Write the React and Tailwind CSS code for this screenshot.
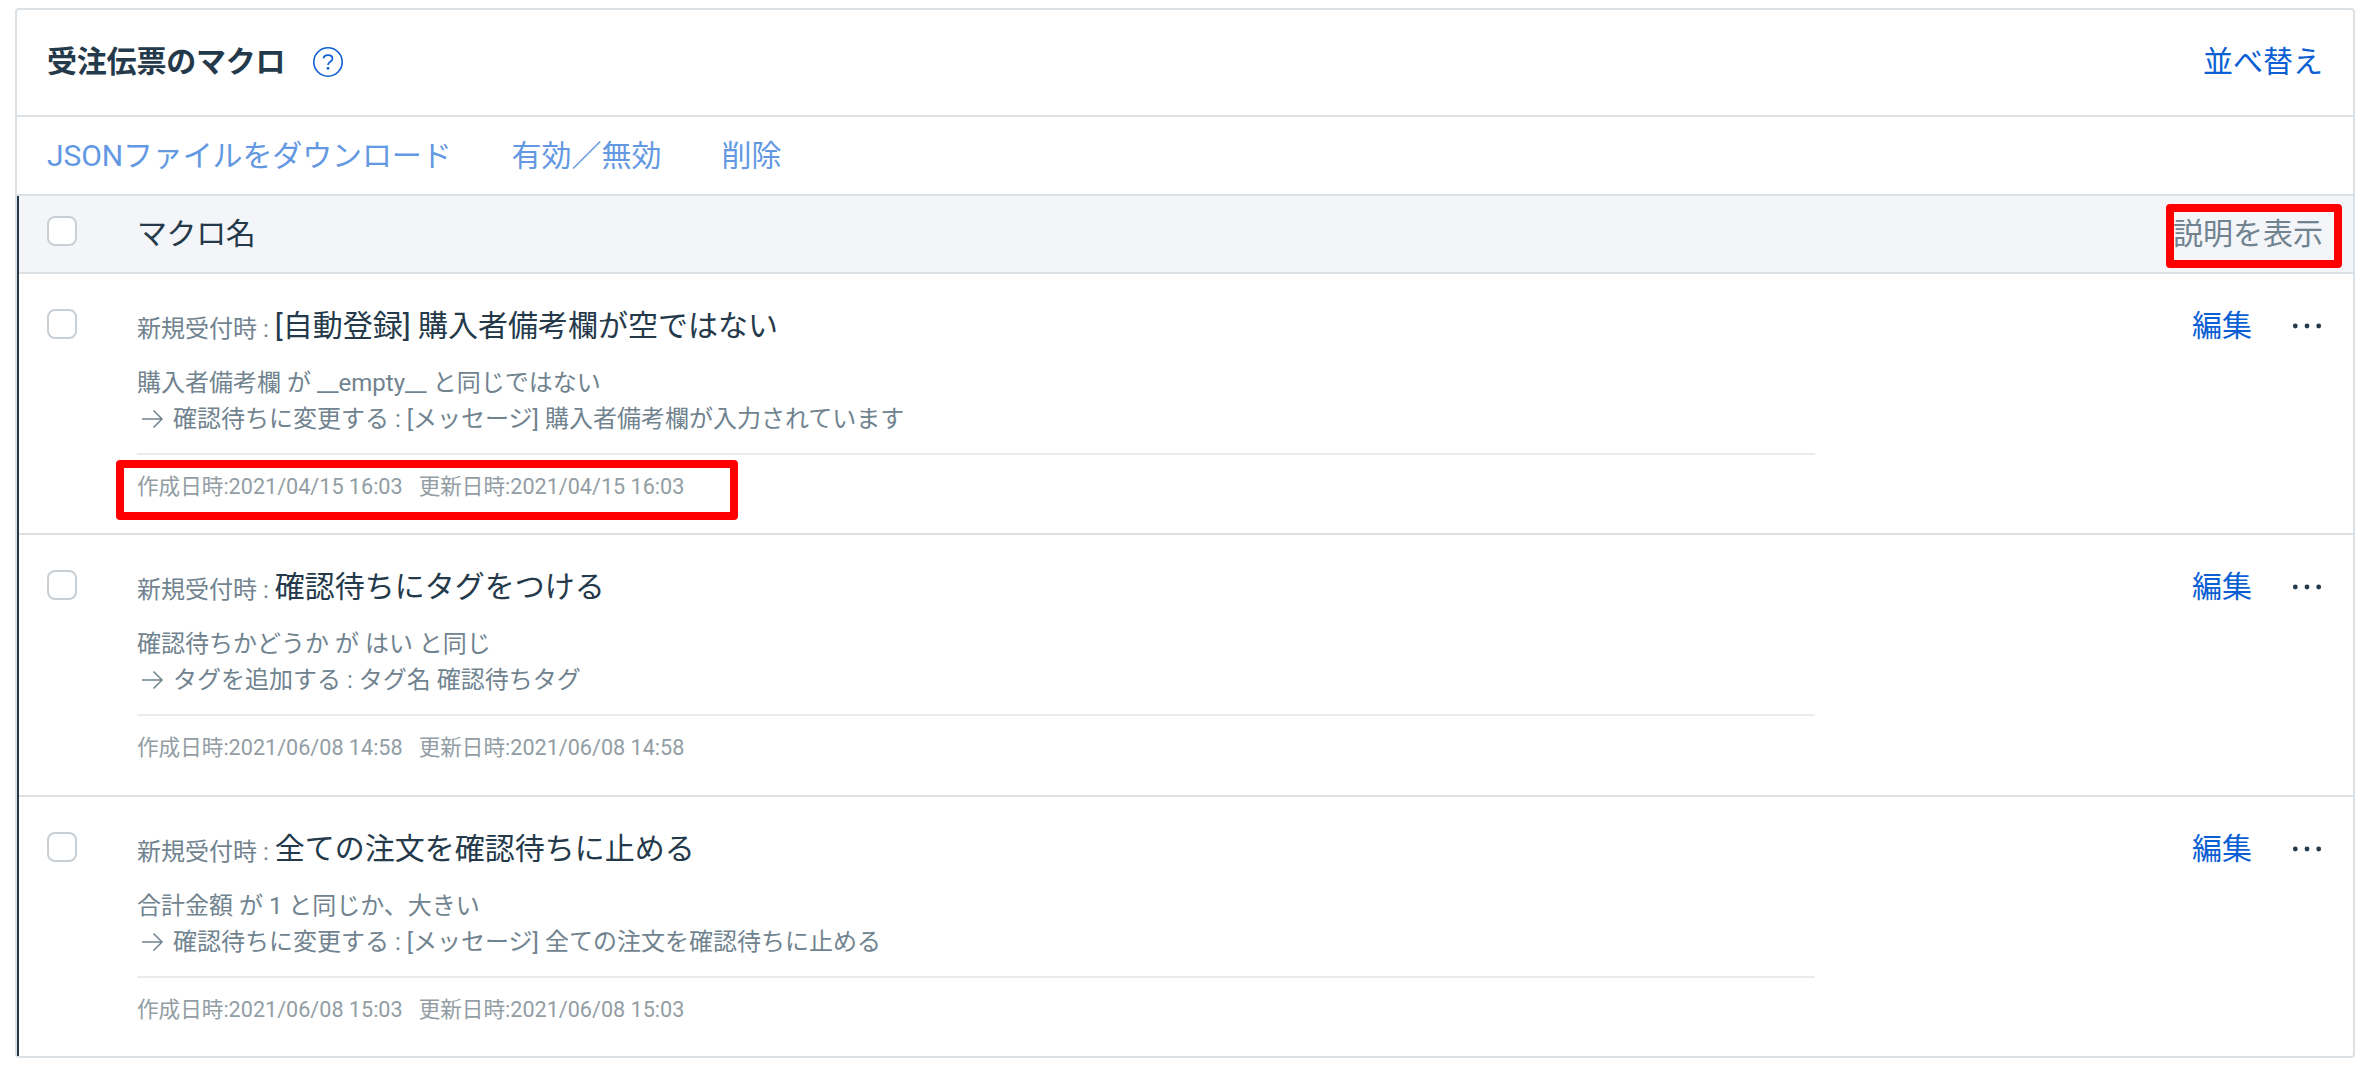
import React, { useState } from "react";

const macros = [
  {
    id: 1,
    trigger: "新規受付時",
    name: "[自動登録] 購入者備考欄が空ではない",
    condition: "購入者備考欄 が __empty__ と同じではない",
    action: "確認待ちに変更する : [メッセージ] 購入者備考欄が入力されています",
    createdAt: "2021/04/15 16:03",
    updatedAt: "2021/04/15 16:03",
    highlighted: true,
    height: "h-[261px]",
  },
  {
    id: 2,
    trigger: "新規受付時",
    name: "確認待ちにタグをつける",
    condition: "確認待ちかどうか が はい と同じ",
    action: "タグを追加する : タグ名 確認待ちタグ",
    createdAt: "2021/06/08 14:58",
    updatedAt: "2021/06/08 14:58",
    height: "h-[262px]",
  },
  {
    id: 3,
    trigger: "新規受付時",
    name: "全ての注文を確認待ちに止める",
    condition: "合計金額 が 1 と同じか、大きい",
    action: "確認待ちに変更する : [メッセージ] 全ての注文を確認待ちに止める",
    createdAt: "2021/06/08 15:03",
    updatedAt: "2021/06/08 15:03",
    height: "h-[259px]",
  },
];

const Checkbox = ({ checked, onChange }) => (
  <input
    type="checkbox"
    checked={checked}
    onChange={onChange}
    className="block h-[30px] w-[30px] shrink-0 appearance-none rounded-[8px] border-2 border-[#c8cfd5] bg-white checked:bg-[#0b5fd3]"
  />
);

const HelpIcon = () => (
  <svg width="32" height="32" viewBox="0 0 32 32" fill="none" stroke="#0b5fd3">
    <circle cx="16" cy="16" r="14.2" strokeWidth="1.6" />
    <path
      d="M11.5 12.4C11.7 10.3 13.5 9.1 16 9.1s4.5 1.3 4.5 3.5c0 1.8-1.2 2.6-2.5 3.4-1.3.8-2 1.5-2 3.1"
      strokeWidth="1.7"
    />
    <circle cx="16" cy="22.3" r="1.4" fill="#0b5fd3" stroke="none" />
  </svg>
);

const ArrowIcon = () => (
  <svg
    width="24"
    height="24"
    viewBox="0 0 24 24"
    fill="none"
    stroke="#70838f"
    strokeWidth="1.5"
    className="ml-[3px] mr-[9px] shrink-0"
  >
    <path d="M2 12h20M13.5 3.5L22 12l-8.5 8.5" />
  </svg>
);

const MoreIcon = () => (
  <svg width="30" height="6" viewBox="0 0 30 6" fill="#24394a">
    <circle cx="3.3" cy="3" r="2.4" />
    <circle cx="15" cy="3" r="2.4" />
    <circle cx="26.7" cy="3" r="2.4" />
  </svg>
);

const MacroRow = ({ macro, checked, onToggle }) => (
  <li
    className={`flex items-start border-b-2 border-[#dce1e5] pl-7 pr-[31px] last:border-b-0 ${macro.height}`}
  >
    <div className="w-[90px] pt-[35px]">
      <Checkbox checked={checked} onChange={onToggle} />
    </div>
    <div className="relative w-[1678px] pt-[30px]">
      <p className="flex h-[44px] whitespace-pre text-[30px] leading-[44px]">
        <span className="pt-[3px] text-2xl leading-[44px] text-[#70838f]">{macro.trigger} : </span>
        {macro.name}
      </p>
      <div className="mt-[17px] text-2xl leading-9 text-[#70838f]">
        <p>{macro.condition}</p>
        <p className="flex items-center">
          <ArrowIcon />
          {macro.action}
        </p>
      </div>
      <p className="mt-4 flex gap-4 border-t-2 border-[#e8ecef] pt-4 text-[21.6px] leading-8 text-[#929da4]">
        <span>作成日時:{macro.createdAt}</span>
        <span>更新日時:{macro.updatedAt}</span>
      </p>
      {macro.highlighted && (
        <div className="absolute -left-[21px] top-[186px] h-[60px] w-[622px] rounded-[4px] border-8 border-[#ff0000]" />
      )}
    </div>
    <div className="mt-[30px] ml-auto flex h-11 items-center gap-10">
      <button className="text-[30px] leading-[44px] text-[#0b5fd3]">編集</button>
      <MoreIcon />
    </div>
  </li>
);

const App = () => {
  const [selected, setSelected] = useState([]);
  const allSelected = selected.length === macros.length;

  const toggleAll = () => {
    setSelected(allSelected ? [] : macros.map((macro) => macro.id));
  };

  const toggle = (id) => {
    setSelected((prev) =>
      prev.includes(id) ? prev.filter((item) => item !== id) : [...prev, id]
    );
  };

  return (
    <div
      lang="ja"
      className="h-[1090px] bg-white pl-[15px] pr-[23px] pt-2 font-[Roboto,'Noto_Sans_CJK_JP',sans-serif] text-[#24394a]"
    >
      <section className="h-[1050px] rounded-[4px] border-2 border-[#dce1e5]">
        <header className="flex h-[107px] items-center border-b-2 border-[#dce1e5] px-[30px] pb-[2px]">
          <h1 className="mr-[27px] text-[30px] font-bold leading-[44px] tracking-[-0.2px]">
            受注伝票のマクロ
          </h1>
          <HelpIcon />
          <button className="ml-auto text-[30px] leading-[44px] text-[#0b5fd3]">並べ替え</button>
        </header>
        <div className="flex h-[79px] items-center gap-[60px] border-b-2 border-[#dce1e5] px-[30px] text-[30px] leading-[44px] text-[#6398e2]">
          <button className="tracking-[-0.12px]">JSONファイルをダウンロード</button>
          <button>有効／無効</button>
          <button>削除</button>
        </div>
        <div className="border-l-2 border-[#24394a]">
          <div className="flex h-[78px] items-start border-b-2 border-[#dce1e5] bg-[#f3f5f9] pl-7 pr-[30px]">
            <div className="w-[90px] pt-5">
              <Checkbox checked={allSelected} onChange={toggleAll} />
            </div>
            <span className="mt-4 text-[30px] leading-[44px] tracking-[-0.4px]">マクロ名</span>
            <div className="relative ml-auto mt-4">
              <button className="block text-[30px] leading-[44px] text-[#70838f]">説明を表示</button>
              <div className="absolute -left-[7px] -top-2 h-16 w-[176px] rounded-[4px] border-8 border-[#ff0000]" />
            </div>
          </div>
          <ul>
            {macros.map((macro) => (
              <MacroRow
                key={macro.id}
                macro={macro}
                checked={selected.includes(macro.id)}
                onToggle={() => toggle(macro.id)}
              />
            ))}
          </ul>
        </div>
      </section>
    </div>
  );
};

export default App;
